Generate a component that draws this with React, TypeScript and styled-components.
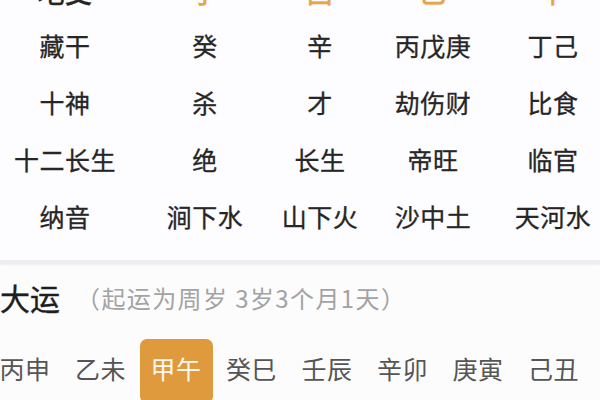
import React from "react";
import styled, { createGlobalStyle } from "styled-components";

const Global = createGlobalStyle`
  html, body { margin: 0; padding: 0; background: #ffffff; }
  body { font-family: "Noto Sans CJK SC", "Noto Sans", sans-serif; overflow: hidden; }
`;

const Page = styled.div`
  width: 600px;
  height: 400px;
  overflow: hidden;
  background: #fcfcfd;
`;

const Table = styled.div`
  display: grid;
  grid-template-columns: 130px 150px 80px 146px 94px;
  grid-template-rows: 50px repeat(4, 57px);
  margin-top: -34px;
  padding-bottom: 16px;
  background: #fdfcfe;
`;

const Cell = styled.div<{ $head?: boolean; $accent?: boolean }>`
  display: flex;
  align-items: center;
  justify-content: center;
  white-space: nowrap;
  font-size: ${(p) => (p.$head ? 27 : 25)}px;
  color: ${(p) => (p.$accent ? "#e6a548" : "#262626")};
  font-weight: ${(p) => (p.$head ? 500 : 400)};
  letter-spacing: 0.5px;
  -webkit-text-stroke: 0.3px currentColor;
`;

const Divider = styled.div`
  height: 4px;
  background: #efedf2;
  box-shadow: 0 1px 2px rgba(200, 196, 210, 0.25);
`;

const Heading = styled.div`
  display: flex;
  align-items: center;
  height: 66px;
`;

const Title = styled.span`
  font-size: 30px;
  color: #1e1e1e;
  margin-right: 16px;
  font-weight: 400;
  -webkit-text-stroke: 0.4px currentColor;
`;

const Sub = styled.span`
  font-size: 24px;
  color: #a3a3a3;
  letter-spacing: 1.4px;
`;

const Tabs = styled.div`
  display: flex;
  gap: 2.5px;
  margin-left: -11.5px;
  margin-top: 9px;
`;

const Tab = styled.div<{ $active?: boolean }>`
  width: 73px;
  height: 64px;
  flex: none;
  display: flex;
  align-items: center;
  justify-content: center;
  font-size: 25px;
  border-radius: 7px;
  color: ${(p) => (p.$active ? "#fff8ec" : "#555555")};
  background: ${(p) => (p.$active ? "#e09a3e" : "transparent")};
  letter-spacing: 0.5px;
  padding-bottom: 6px;
  box-sizing: border-box;
`;

const rows: string[][] = [
  ["藏干", "癸", "辛", "丙戊庚", "丁己"],
  ["十神", "杀", "才", "劫伤财", "比食"],
  ["十二长生", "绝", "长生", "帝旺", "临官"],
  ["纳音", "涧下水", "山下火", "沙中土", "天河水"],
];

const head = ["地支", "子", "酉", "巳", "午"];

const yun = ["丙申", "乙未", "甲午", "癸巳", "壬辰", "辛卯", "庚寅", "己丑"];

export default function App() {
  return (
    <Page>
      <Global />
      <Table>
        {head.map((h, i) => (
          <Cell key={"h" + i} $head $accent={i > 0}>
            {h}
          </Cell>
        ))}
        {rows.map((r, ri) =>
          r.map((c, ci) => <Cell key={ri + "-" + ci}>{c}</Cell>)
        )}
      </Table>
      <Divider />
      <Heading>
        <Title>大运</Title>
        <Sub>（起运为周岁 3岁3个月1天）</Sub>
      </Heading>
      <Tabs>
        {yun.map((y, i) => (
          <Tab key={y} $active={i === 2}>
            {y}
          </Tab>
        ))}
      </Tabs>
    </Page>
  );
}
